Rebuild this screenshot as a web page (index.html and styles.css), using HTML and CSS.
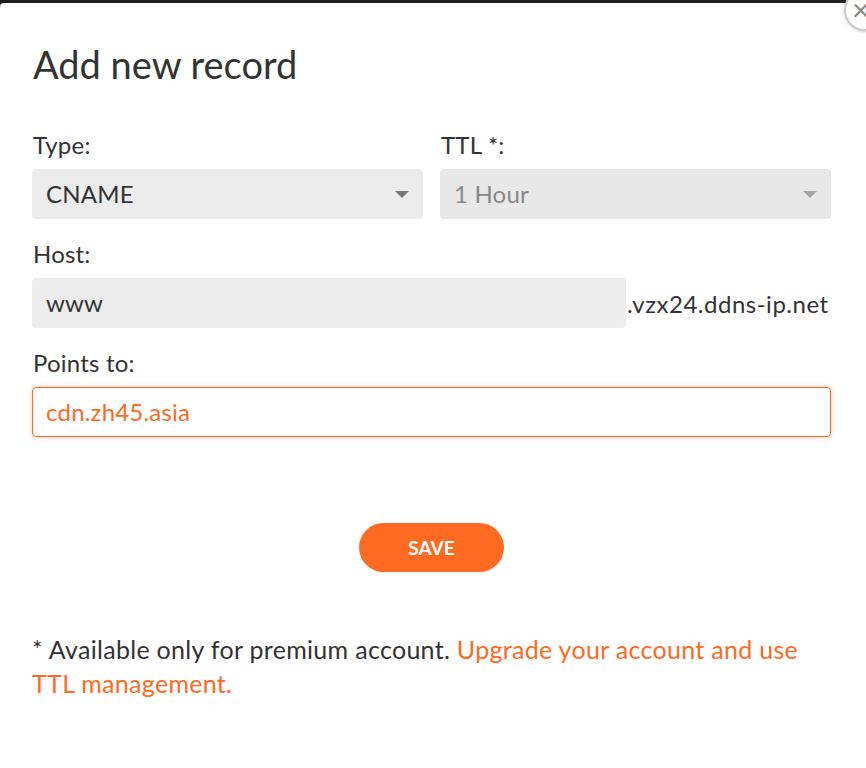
FILE: index.html
```html
<!DOCTYPE html>
<html lang="en">
<head>
	<meta charset="UTF-8">
	<title>Add new record</title>
	<link rel="stylesheet" href="styles.css">
</head>
<body>
	<div class="modal">
		<a class="close" href="javascript:void(0);">&times;</a>
		<h1 class="title">Add new record</h1>
		<div class="row">
			<div class="field">
				<label class="label">Type:</label>
				<div class="select"><span>CNAME</span><i class="caret"></i></div>
			</div>
			<div class="field">
				<label class="label">TTL *:</label>
				<div class="select disabled"><span>1 Hour</span><i class="caret"></i></div>
			</div>
		</div>
		<div class="field">
			<label class="label">Host:</label>
			<div class="host">
				<div class="input grey">www</div>
				<span class="suffix">.vzx24.ddns-ip.net</span>
			</div>
		</div>
		<div class="field">
			<label class="label">Points to:</label>
			<div class="input focus">cdn.zh45.asia</div>
		</div>
		<div class="actions">
			<a class="btn" href="javascript:void(0);">SAVE</a>
		</div>
		<p class="note">* Available only for premium account. <a href="javascript:void(0);">Upgrade your account and use TTL management.</a></p>
	</div>
</body>
</html>
```
FILE: styles.css
```css
* {
    margin: 0;
    padding: 0;
    box-sizing: border-box;
}
a {
    text-decoration: none;
}
body {
    background: #1f1f1f;
    font-family: Lato, "Open Sans", sans-serif;
    color: #333;
    overflow: hidden;
}
.modal {
    position: relative;
    margin-top: 3px;
    height: 765px;
    background: #fff;
    border-radius: 4px 0 0 0;
    padding: 36px 35px 0 32px;
}
.close {
    position: absolute;
    top: -14px;
    right: -20px;
    width: 42px;
    height: 42px;
    border-radius: 50%;
    border: 2px solid #ccc;
    background: #fff;
    color: #888;
    font-size: 30px;
    line-height: 36px;
    text-indent: 6px;
    box-shadow: 0 1px 3px rgba(0,0,0,0.2);
}
.title {
    font-weight: 400;
    font-size: 38px;
    line-height: 50px;
    margin: 0 0 41px 1px;
    color: #333;
}
.row {
    display: flex;
    gap: 17px;
}
.row .field {
    flex: 1;
}
.field {
    margin-bottom: 20px;
}
.label {
    display: block;
    font-size: 24px;
    line-height: 30px;
    padding-left: 1px;
    margin-bottom: 9px;
    letter-spacing: 0.2px;
}
.select, .input {
    height: 50px;
    border-radius: 4px;
    background: #ececec;
    font-size: 24px;
    line-height: 50px;
    padding: 0 14px;
    color: #333;
    letter-spacing: 0.2px;
}
.select {
    display: flex;
    justify-content: space-between;
    align-items: center;
}
.select.disabled {
    background: #e8e8e8;
    color: #888;
}
.caret {
    width: 0;
    height: 0;
    border-left: 7px solid transparent;
    border-right: 7px solid transparent;
    border-top: 7px solid #777;
}
.select.disabled .caret {
    border-top-color: #a5a5a5;
}
.host {
    display: flex;
    align-items: center;
}
.host .input {
    width: 594px;
}
.suffix {
    font-size: 24px;
    letter-spacing: 0.5px;
    margin-left: 1px;
}
.input.focus {
    background: #fff;
    border: 1px solid #ff6a22;
    box-shadow: 0 0 5px rgba(255,106,34,0.35);
    color: #ff6a22;
    line-height: 48px;
    padding: 0 13px;
}
.actions {
    display: flex;
    justify-content: center;
    margin-top: 86px;
}
.btn {
    width: 145px;
    height: 49px;
    border-radius: 25px;
    background: #ff6b22;
    color: #fff;
    font-weight: 700;
    font-size: 19px;
    line-height: 49px;
    text-align: center;
}
.note {
    margin-top: 60px;
    font-size: 25px;
    line-height: 34px;
    letter-spacing: 0.3px;
    color: #333;
    padding-right: 30px;
}
.note a {
    color: #ff6a22;
}
```
